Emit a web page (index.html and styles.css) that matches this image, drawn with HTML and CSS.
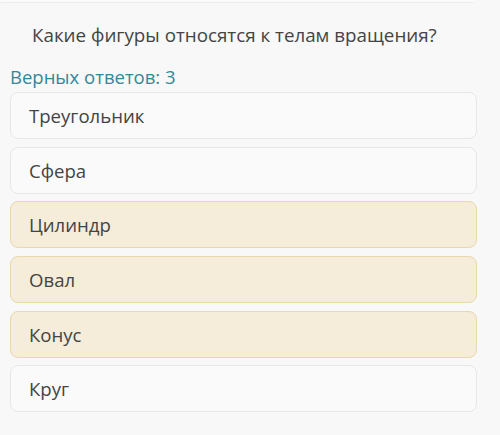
FILE: index.html
```html
<!DOCTYPE html>
<html lang="ru">
<head>
    <meta charset="UTF-8">
    <meta name="viewport" content="width=device-width, initial-scale=1.0">
    <title>Тела вращения</title>
    <link rel="stylesheet" href="styles.css">
</head>
<body>
    <div class="prev-card"></div>
    <p class="question">Какие фигуры относятся к телам вращения?</p>
    <div class="answers-count">Верных ответов: 3</div>
    <div class="options">
        <div class="option">Треугольник</div>
        <div class="option">Сфера</div>
        <div class="option selected">Цилиндр</div>
        <div class="option selected">Овал</div>
        <div class="option selected">Конус</div>
        <div class="option">Круг</div>
    </div>
</body>
</html>
```

FILE: styles.css
```css
body {
    margin: 0;
    background-color: #f8f8f8;
    font-family: "Open Sans", "Noto Sans", sans-serif;
    color: #444;
}

.prev-card {
    width: 475px;
    height: 2px;
    background-color: #fbfbfb;
    border-bottom: 1px solid #ececec;
    border-radius: 0 0 8px 8px;
}

.question {
    margin: 0;
    padding: 19px 0 0 32px;
    font-size: 18.8px;
    line-height: 26px;
}

.answers-count {
    margin: 17px 0 0 10px;
    color: #36879a;
    font-size: 18.5px;
    line-height: 24px;
}

.options {
    display: flex;
    flex-direction: column;
    gap: 7.7px;
    width: 467px;
    margin: 3px 0 0 10px;
}

.option {
    height: 45px;
    line-height: 45px;
    padding-left: 18px;
    font-size: 18.6px;
    background-color: #fafafa;
    border: 1px solid #e7e7e7;
    border-radius: 8px;
}

.option.selected {
    background-color: #f5ecd9;
    border-color: #e8d8ae;
}
```
